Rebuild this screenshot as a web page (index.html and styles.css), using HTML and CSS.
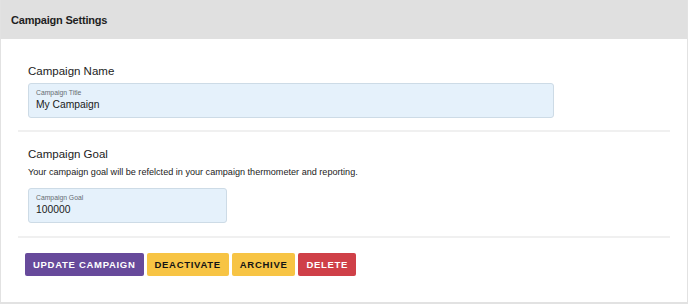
FILE: index.html
```html
<!DOCTYPE html>
<html>
<head>
<meta charset="utf-8">
<link rel="stylesheet" href="styles.css">
</head>
<body>
<div class="card">
  <div class="card-header">Campaign Settings</div>
  <div class="card-body">
    <section class="section first">
      <h3 class="section-title">Campaign Name</h3>
      <div class="field wide">
        <div class="field-label">Campaign Title</div>
        <div class="field-value">My Campaign</div>
      </div>
    </section>
    <section class="section second">
      <h3 class="section-title">Campaign Goal</h3>
      <p class="section-text">Your campaign goal will be refelcted in your campaign thermometer and reporting.</p>
      <div class="field narrow">
        <div class="field-label">Campaign Goal</div>
        <div class="field-value">100000</div>
      </div>
    </section>
    <div class="actions">
      <button class="btn btn-purple">Update Campaign</button>
      <button class="btn btn-yellow">Deactivate</button>
      <button class="btn btn-yellow">Archive</button>
      <button class="btn btn-red">Delete</button>
    </div>
  </div>
</div>
</body>
</html>
```
FILE: styles.css
```css
* { box-sizing: border-box; }
html, body { margin: 0; padding: 0; background: #ffffff; }
body {
  font-family: "Liberation Sans", Arial, sans-serif;
  color: #222222;
  width: 688px;
  height: 305px;
  overflow: hidden;
}
.card {
  width: 688px;
  height: 304px;
  border: 1px solid #e2e2e2;
  border-top: none;
  border-bottom: 2px solid #e2e2e2;
}
.card-header {
  height: 39px;
  background: #e0e0e0;
  padding-left: 10px;
  display: flex;
  align-items: center;
  font-size: 11px;
  letter-spacing: -0.2px;
  font-weight: bold;
  color: #1e1e1e;
}
.card-body {
  padding: 0 17px;
}
.section {
  padding: 0 10px;
  border-bottom: 2px solid #f0f0f0;
}
.section.first {
  padding-top: 24px;
  padding-bottom: 12px;
}
.section.second {
  padding-top: 14px;
  padding-bottom: 13px;
}
.section-title {
  margin: 0 0 4px 0;
  font-size: 11.5px;
  font-weight: normal;
  line-height: 16px;
  color: #1c1c1c;
}
.section-text {
  margin: 4px 0 10px 0;
  font-size: 9.1px;
  line-height: 12px;
  color: #222222;
}
.field {
  height: 35px;
  background: #e5f1fb;
  border: 1px solid #cddbe6;
  border-radius: 3px;
  padding: 4px 7px 0 7px;
}
.field.wide { width: 526px; }
.field.narrow { width: 199px; }
.field-label {
  font-size: 6.8px;
  line-height: 9px;
  color: #666c72;
}
.field-value {
  font-size: 10.3px;
  line-height: 14px;
  margin-top: 1px;
  color: #1a1a1a;
}
.actions {
  display: flex;
  gap: 3px;
  padding: 15px 0 0 7px;
}
.btn {
  height: 23px;
  border: none;
  border-radius: 2px;
  padding: 0 8px;
  font-family: "Liberation Sans", Arial, sans-serif;
  font-size: 9.5px;
  font-weight: bold;
  letter-spacing: 0.7px;
  text-transform: uppercase;
}
.btn-purple { background: #674a9b; color: #ffffff; }
.btn-yellow { background: #f7c444; color: #141414; }
.btn-red { background: #cf4048; color: #ffffff; }
```
